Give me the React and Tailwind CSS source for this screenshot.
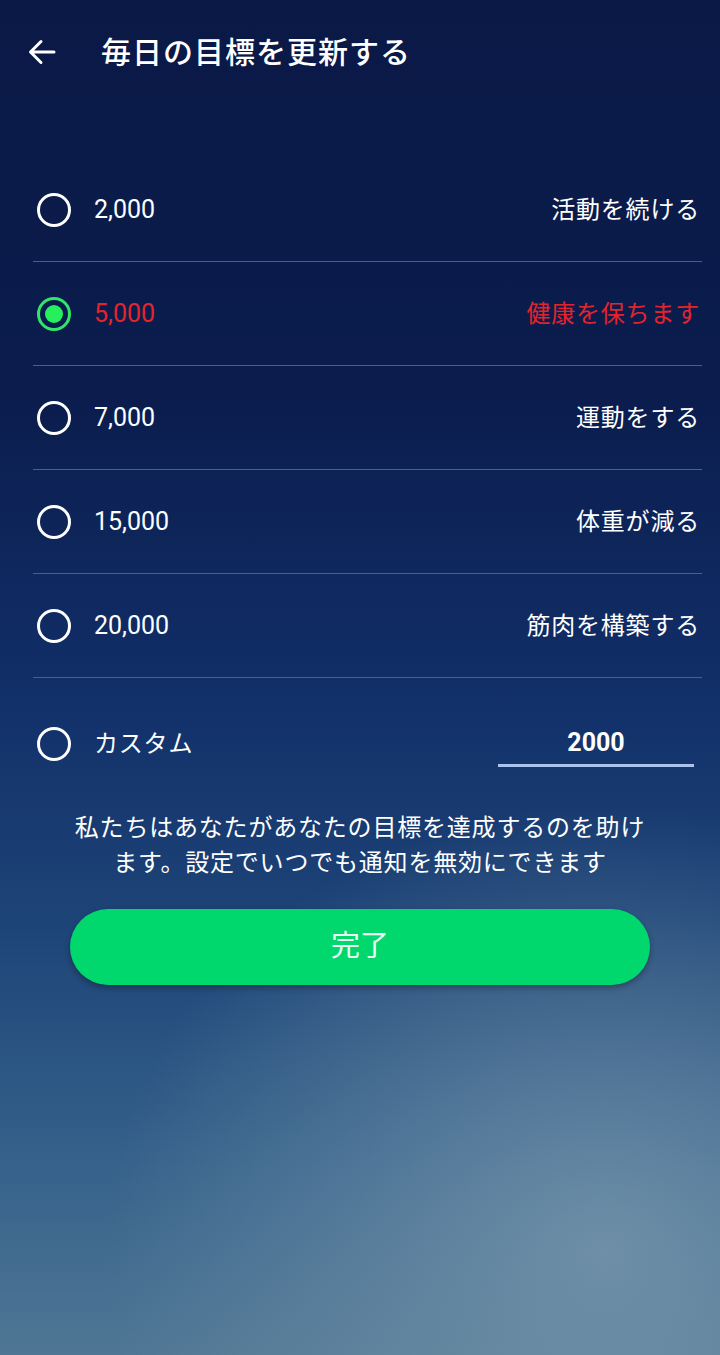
import { useState } from "react";

const goals = [
    { steps: "2,000", label: "活動を続ける" },
    { steps: "5,000", label: "健康を保ちます" },
    { steps: "7,000", label: "運動をする" },
    { steps: "15,000", label: "体重が減る" },
    { steps: "20,000", label: "筋肉を構築する" },
];

const font = "font-['Roboto','Noto_Sans_CJK_JP',sans-serif]";

const BackIcon = () => (
    <svg viewBox="0 0 30 30" className="w-[30px] h-[30px]" fill="none" stroke="white" strokeWidth="3" strokeLinecap="round" strokeLinejoin="round">
        <path d="M27 15H4M14 4.5L3.5 15 14 25.5" />
    </svg>
);

const Radio = ({ checked }) =>
    checked ? (
        <div className="w-[34px] h-[34px] rounded-full border-[3px] border-[#32e46a] flex items-center justify-center shrink-0">
            <div className="w-[18px] h-[18px] rounded-full bg-[#25ef5c]" />
        </div>
    ) : (
        <div className="w-[34px] h-[34px] rounded-full border-[3px] border-white shrink-0" />
    );

export default function App() {
    const [selected, setSelected] = useState(1);

    return (
        <div
            className={`w-[720px] min-h-[1355px] flex flex-col text-white ${font} bg-[radial-gradient(ellipse_500px_440px_at_84%_92%,rgba(125,155,175,0.75),rgba(125,155,175,0)),linear-gradient(to_bottom,#0a1946_0%,#0b1d4e_30%,#12306a_52%,#1d4477_68%,#34608a_85%,#4f7694_100%)]`}
        >
            <div className="h-[100px] flex items-center pl-[27px] pt-[4px]">
                <button className="w-[30px] h-[30px] flex items-center justify-center">
                    <BackIcon />
                </button>
                <h1 className="ml-[44px] text-[30px] font-medium tracking-[1px]">毎日の目標を更新する</h1>
            </div>

            <div className="mt-[58px] ml-[33px] mr-[18px]">
                {goals.map((g, i) => (
                    <button
                        key={g.steps}
                        onClick={() => setSelected(i)}
                        className="w-full h-[104px] flex items-center pl-[4px] pr-[2px] border-b border-[#4a5f8c]"
                    >
                        <Radio checked={selected === i} />
                        <span className={`ml-[23px] text-[25px] ${selected === i ? "text-[#e5232c]" : "text-white"}`}>
                            {g.steps}
                        </span>
                        <span className={`ml-auto text-[24px] tracking-[0.8px] ${selected === i ? "text-[#e5232c]" : "text-white"}`}>
                            {g.label}
                        </span>
                    </button>
                ))}

                <div className="h-[128px] flex items-center pl-[4px] pt-[3px]">
                    <Radio checked={false} />
                    <span className="ml-[23px] text-[24px] tracking-[0.8px]">カスタム</span>
                    <div className="ml-auto mr-[8px] w-[196px] border-b-[3px] border-[#a9c3ee] pt-[4px] pb-[2px] text-center text-[25px] font-bold">
                        2000
                    </div>
                </div>
            </div>

            <p className="mt-[5px] text-center text-[24px] leading-[35px] tracking-[0.8px]">
                私たちはあなたがあなたの目標を達成するのを助け
                <br />
                ます。設定でいつでも通知を無効にできます
            </p>

            <button className="mt-[28px] mx-auto w-[580px] h-[76px] rounded-full bg-[#00d86e] shadow-[0_3px_6px_rgba(0,0,0,0.3)] text-[29px] text-[#eafff2]">
                完了
            </button>
        </div>
    );
}
